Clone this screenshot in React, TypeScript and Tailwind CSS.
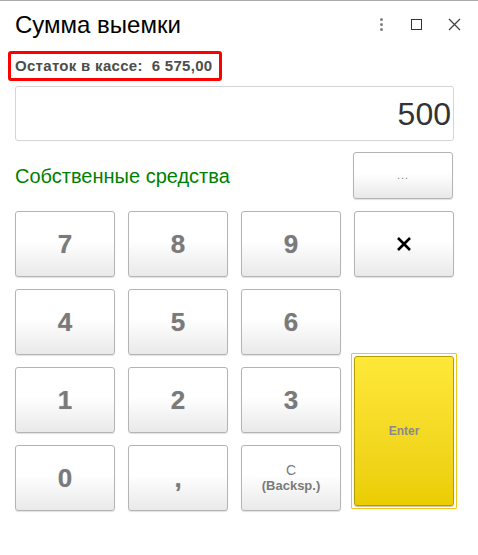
import { ReactNode } from "react";

const FONT = { fontFamily: '"Liberation Sans", Arial, sans-serif' };

function Key({ children, className = "" }: { children: ReactNode; className?: string }) {
  return (
    <button
      type="button"
      className={`flex h-[66px] w-[100px] flex-col items-center justify-center rounded-[3px] border border-[#b4b4b4] bg-gradient-to-b from-white from-45% to-[#e9e9e9] text-[#7a7a7a] shadow-[0_1px_1px_rgba(0,0,0,0.12)] ${className}`}
    >
      {children}
    </button>
  );
}

function Digit({ d }: { d: string }) {
  return (
    <Key>
      <span className="text-[26px] font-bold leading-none [text-shadow:0_0_1px_rgba(0,0,0,0.25)]">{d}</span>
    </Key>
  );
}

export default function App() {
  const digits = ["7", "8", "9", "4", "5", "6", "1", "2", "3", "0", ","];

  return (
    <div className="h-[555px] w-[478px] border-t border-[#aaaaaa] bg-white" style={FONT}>
      <header className="flex h-[47px] items-center pl-[15px] pr-[17px]">
        <h1 className="flex-1 text-[24px] leading-none text-black">Сумма выемки</h1>
        <div className="flex items-center">
          <div className="flex w-[6px] flex-col items-center gap-[2px]">
            <span className="h-[3px] w-[3px] rounded-full bg-[#808080]" />
            <span className="h-[3px] w-[3px] rounded-full bg-[#808080]" />
            <span className="h-[3px] w-[3px] rounded-full bg-[#808080]" />
          </div>
          <span className="ml-[27px] h-[11px] w-[11px] border-[1.5px] border-[#333]" />
          <svg className="ml-[26px]" width="13" height="13" viewBox="0 0 13 13">
            <path d="M1 1 L12 12 M12 1 L1 12" stroke="#444" strokeWidth="1.3" />
          </svg>
        </div>
      </header>

      <div className="ml-[8px] mt-[3px] inline-flex h-[30px] items-center rounded-[3px] border-[3px] border-[#ff0000] pl-[4px] pr-[7px]">
        <span className="text-[15px] font-bold tracking-[0.3px] text-[#4d4d4d]">Остаток в кассе:&nbsp; 6 575,00</span>
      </div>

      <div className="ml-[15px] mr-[24px] mt-[5px] flex h-[55px] items-center justify-end rounded-[3px] border border-[#d4d4d4] pr-[2px]">
        <span className="text-[32px] leading-none text-[#333]">500</span>
      </div>

      <div className="mt-[11px] flex items-center pl-[15px] pr-[25px]">
        <span className="flex-1 text-[20px] text-[#008000]">Собственные средства</span>
        <button
          type="button"
          className="flex h-[47px] w-[100px] items-center justify-center rounded-[3px] border border-[#b4b4b4] bg-gradient-to-b from-white from-45% to-[#e9e9e9] text-[11px] tracking-[1px] text-[#888] shadow-[0_1px_1px_rgba(0,0,0,0.12)]"
        >
          ...
        </button>
      </div>

      <div className="mt-[12px] flex gap-[13px] pl-[15px]">
        <div className="grid grid-cols-[100px_100px_100px] gap-x-[13px] gap-y-[12px]">
          {digits.map((d) => (
            <Digit key={d} d={d} />
          ))}
          <Key>
            <span className="text-[14px] leading-[15px]">C</span>
            <span className="text-[13px] font-bold leading-[15px]">(Backsp.)</span>
          </Key>
        </div>
        <div className="flex flex-col justify-between">
          <Key>
            <svg width="16" height="16" viewBox="0 0 16 16">
              <path d="M2 2 L14 14 M14 2 L2 14" stroke="#000" strokeWidth="2.6" />
            </svg>
          </Key>
          <div className="-ml-[3px] mb-[2px] rounded-[1px] border border-[#f5c518] p-[2px]">
            <button
              type="button"
              className="flex h-[150px] w-[100px] items-center justify-center rounded-[3px] border border-[#b29c00] bg-gradient-to-b from-[#ffe838] to-[#ebcd00] text-[12px] font-bold text-[#8a8a8a] shadow-[0_1px_1px_rgba(0,0,0,0.25)]"
            >
              Enter
            </button>
          </div>
        </div>
      </div>
    </div>
  );
}
